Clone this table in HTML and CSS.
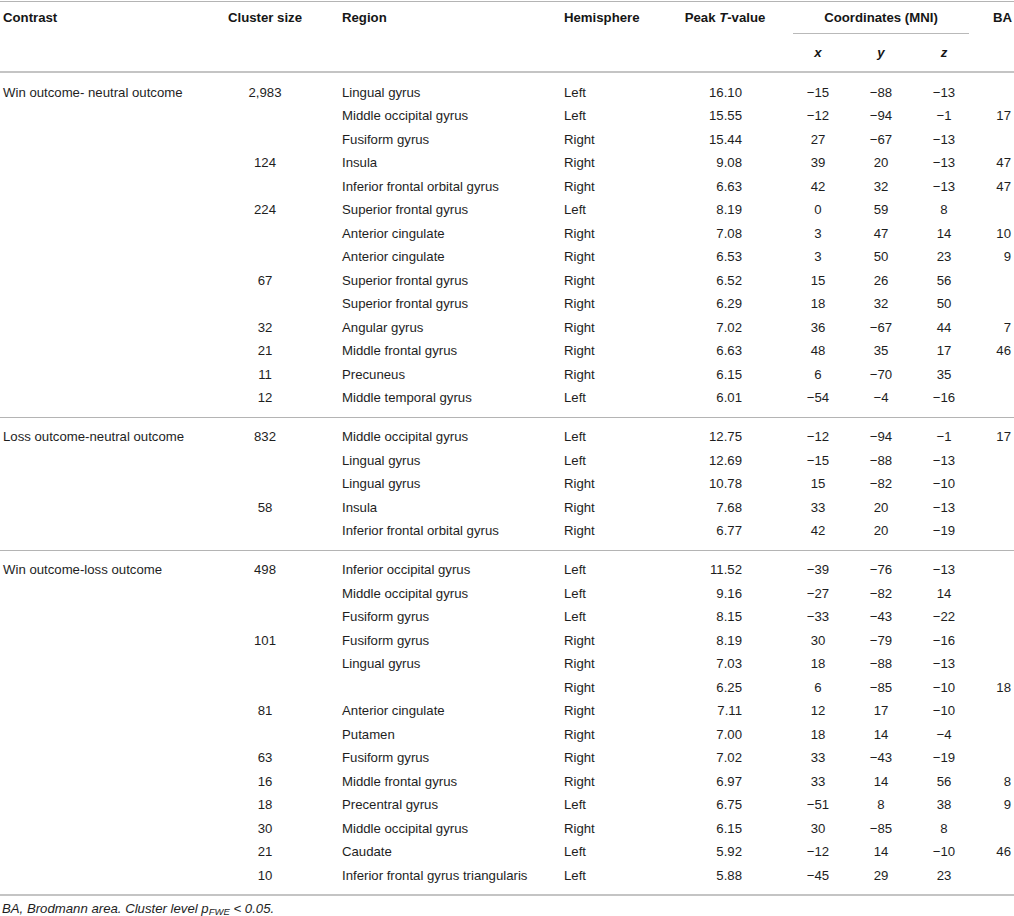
FILE: index.html
```html
<!DOCTYPE html>
<html lang="en">
<head>
<meta charset="utf-8">
<title>Table</title>
<link rel="stylesheet" href="styles.css">
</head>
<body>
<div class="wrap">
<table class="results">
  <colgroup>
    <col class="c-contrast"><col class="c-size"><col class="c-region"><col class="c-hemi"><col class="c-peak"><col class="c-x"><col class="c-y"><col class="c-z"><col class="c-ba">
  </colgroup>
  <thead>
    <tr class="h1">
      <th rowspan="2" class="l">Contrast</th>
      <th rowspan="2" class="c">Cluster size</th>
      <th rowspan="2" class="l">Region</th>
      <th rowspan="2" class="l">Hemisphere</th>
      <th rowspan="2" class="peak-h">Peak <i>T</i>-value</th>
      <th colspan="3" class="coord-h"><div class="coord-title">Coordinates (MNI)</div></th>
      <th rowspan="2" class="ba-h">BA</th>
    </tr>
    <tr class="h2">
      <th class="c"><i>x</i></th>
      <th class="c"><i>y</i></th>
      <th class="c"><i>z</i></th>
    </tr>
  </thead>
  <tbody>
    <tr><td class="l">Win outcome- neutral outcome</td><td class="c">2,983</td><td class="l">Lingual gyrus</td><td class="l">Left</td><td class="peak">16.10</td><td class="c">−15</td><td class="c">−88</td><td class="c">−13</td><td class="ba"></td></tr>
    <tr><td></td><td class="c"></td><td class="l">Middle occipital gyrus</td><td class="l">Left</td><td class="peak">15.55</td><td class="c">−12</td><td class="c">−94</td><td class="c">−1</td><td class="ba">17</td></tr>
    <tr><td></td><td class="c"></td><td class="l">Fusiform gyrus</td><td class="l">Right</td><td class="peak">15.44</td><td class="c">27</td><td class="c">−67</td><td class="c">−13</td><td class="ba"></td></tr>
    <tr><td></td><td class="c">124</td><td class="l">Insula</td><td class="l">Right</td><td class="peak">9.08</td><td class="c">39</td><td class="c">20</td><td class="c">−13</td><td class="ba">47</td></tr>
    <tr><td></td><td class="c"></td><td class="l">Inferior frontal orbital gyrus</td><td class="l">Right</td><td class="peak">6.63</td><td class="c">42</td><td class="c">32</td><td class="c">−13</td><td class="ba">47</td></tr>
    <tr><td></td><td class="c">224</td><td class="l">Superior frontal gyrus</td><td class="l">Left</td><td class="peak">8.19</td><td class="c">0</td><td class="c">59</td><td class="c">8</td><td class="ba"></td></tr>
    <tr><td></td><td class="c"></td><td class="l">Anterior cingulate</td><td class="l">Right</td><td class="peak">7.08</td><td class="c">3</td><td class="c">47</td><td class="c">14</td><td class="ba">10</td></tr>
    <tr><td></td><td class="c"></td><td class="l">Anterior cingulate</td><td class="l">Right</td><td class="peak">6.53</td><td class="c">3</td><td class="c">50</td><td class="c">23</td><td class="ba">9</td></tr>
    <tr><td></td><td class="c">67</td><td class="l">Superior frontal gyrus</td><td class="l">Right</td><td class="peak">6.52</td><td class="c">15</td><td class="c">26</td><td class="c">56</td><td class="ba"></td></tr>
    <tr><td></td><td class="c"></td><td class="l">Superior frontal gyrus</td><td class="l">Right</td><td class="peak">6.29</td><td class="c">18</td><td class="c">32</td><td class="c">50</td><td class="ba"></td></tr>
    <tr><td></td><td class="c">32</td><td class="l">Angular gyrus</td><td class="l">Right</td><td class="peak">7.02</td><td class="c">36</td><td class="c">−67</td><td class="c">44</td><td class="ba">7</td></tr>
    <tr><td></td><td class="c">21</td><td class="l">Middle frontal gyrus</td><td class="l">Right</td><td class="peak">6.63</td><td class="c">48</td><td class="c">35</td><td class="c">17</td><td class="ba">46</td></tr>
    <tr><td></td><td class="c">11</td><td class="l">Precuneus</td><td class="l">Right</td><td class="peak">6.15</td><td class="c">6</td><td class="c">−70</td><td class="c">35</td><td class="ba"></td></tr>
    <tr><td></td><td class="c">12</td><td class="l">Middle temporal gyrus</td><td class="l">Left</td><td class="peak">6.01</td><td class="c">−54</td><td class="c">−4</td><td class="c">−16</td><td class="ba"></td></tr>
  </tbody>
  <tbody>
    <tr><td class="l">Loss outcome-neutral outcome</td><td class="c">832</td><td class="l">Middle occipital gyrus</td><td class="l">Left</td><td class="peak">12.75</td><td class="c">−12</td><td class="c">−94</td><td class="c">−1</td><td class="ba">17</td></tr>
    <tr><td></td><td class="c"></td><td class="l">Lingual gyrus</td><td class="l">Left</td><td class="peak">12.69</td><td class="c">−15</td><td class="c">−88</td><td class="c">−13</td><td class="ba"></td></tr>
    <tr><td></td><td class="c"></td><td class="l">Lingual gyrus</td><td class="l">Right</td><td class="peak">10.78</td><td class="c">15</td><td class="c">−82</td><td class="c">−10</td><td class="ba"></td></tr>
    <tr><td></td><td class="c">58</td><td class="l">Insula</td><td class="l">Right</td><td class="peak">7.68</td><td class="c">33</td><td class="c">20</td><td class="c">−13</td><td class="ba"></td></tr>
    <tr><td></td><td class="c"></td><td class="l">Inferior frontal orbital gyrus</td><td class="l">Right</td><td class="peak">6.77</td><td class="c">42</td><td class="c">20</td><td class="c">−19</td><td class="ba"></td></tr>
  </tbody>
  <tbody class="last">
    <tr><td class="l">Win outcome-loss outcome</td><td class="c">498</td><td class="l">Inferior occipital gyrus</td><td class="l">Left</td><td class="peak">11.52</td><td class="c">−39</td><td class="c">−76</td><td class="c">−13</td><td class="ba"></td></tr>
    <tr><td></td><td class="c"></td><td class="l">Middle occipital gyrus</td><td class="l">Left</td><td class="peak">9.16</td><td class="c">−27</td><td class="c">−82</td><td class="c">14</td><td class="ba"></td></tr>
    <tr><td></td><td class="c"></td><td class="l">Fusiform gyrus</td><td class="l">Left</td><td class="peak">8.15</td><td class="c">−33</td><td class="c">−43</td><td class="c">−22</td><td class="ba"></td></tr>
    <tr><td></td><td class="c">101</td><td class="l">Fusiform gyrus</td><td class="l">Right</td><td class="peak">8.19</td><td class="c">30</td><td class="c">−79</td><td class="c">−16</td><td class="ba"></td></tr>
    <tr><td></td><td class="c"></td><td class="l">Lingual gyrus</td><td class="l">Right</td><td class="peak">7.03</td><td class="c">18</td><td class="c">−88</td><td class="c">−13</td><td class="ba"></td></tr>
    <tr><td></td><td class="c"></td><td class="l"></td><td class="l">Right</td><td class="peak">6.25</td><td class="c">6</td><td class="c">−85</td><td class="c">−10</td><td class="ba">18</td></tr>
    <tr><td></td><td class="c">81</td><td class="l">Anterior cingulate</td><td class="l">Right</td><td class="peak">7.11</td><td class="c">12</td><td class="c">17</td><td class="c">−10</td><td class="ba"></td></tr>
    <tr><td></td><td class="c"></td><td class="l">Putamen</td><td class="l">Right</td><td class="peak">7.00</td><td class="c">18</td><td class="c">14</td><td class="c">−4</td><td class="ba"></td></tr>
    <tr><td></td><td class="c">63</td><td class="l">Fusiform gyrus</td><td class="l">Right</td><td class="peak">7.02</td><td class="c">33</td><td class="c">−43</td><td class="c">−19</td><td class="ba"></td></tr>
    <tr><td></td><td class="c">16</td><td class="l">Middle frontal gyrus</td><td class="l">Right</td><td class="peak">6.97</td><td class="c">33</td><td class="c">14</td><td class="c">56</td><td class="ba">8</td></tr>
    <tr><td></td><td class="c">18</td><td class="l">Precentral gyrus</td><td class="l">Left</td><td class="peak">6.75</td><td class="c">−51</td><td class="c">8</td><td class="c">38</td><td class="ba">9</td></tr>
    <tr><td></td><td class="c">30</td><td class="l">Middle occipital gyrus</td><td class="l">Right</td><td class="peak">6.15</td><td class="c">30</td><td class="c">−85</td><td class="c">8</td><td class="ba"></td></tr>
    <tr><td></td><td class="c">21</td><td class="l">Caudate</td><td class="l">Left</td><td class="peak">5.92</td><td class="c">−12</td><td class="c">14</td><td class="c">−10</td><td class="ba">46</td></tr>
    <tr><td></td><td class="c">10</td><td class="l">Inferior frontal gyrus triangularis</td><td class="l">Left</td><td class="peak">5.88</td><td class="c">−45</td><td class="c">29</td><td class="c">23</td><td class="ba"></td></tr>
  </tbody>
</table>
<p class="note"><i>BA, Brodmann area. Cluster level p<sub>FWE</sub> &lt; 0.05.</i></p>
</div>
</body>
</html>
```

FILE: styles.css
```css
html, body {
  margin: 0;
  padding: 0;
  background: #ffffff;
}

body {
  font-family: "Liberation Sans", Arial, Helvetica, sans-serif;
  font-size: 13.2px;
  color: #1e1e1e;
}

.wrap {
  width: 1014px;
  padding-top: 1px;
}

.results {
  width: 1014px;
  table-layout: fixed;
  border-collapse: separate;
  border-spacing: 0;
  border-top: 1px solid #b4b4b4;
}

.c-contrast { width: 191px; }
.c-size { width: 148px; }
.c-region { width: 222px; }
.c-hemi { width: 119px; }
.c-peak { width: 113px; }
.c-x { width: 50px; }
.c-y { width: 76px; }
.c-z { width: 50px; }
.c-ba { width: 45px; }

th, td {
  padding: 0;
  white-space: nowrap;
}

th {
  font-weight: bold;
  color: #161616;
  line-height: 15px;
}

.h1 th {
  vertical-align: top;
  padding-top: 8px;
  border-bottom: 2px solid #c4c4c4;
}

.h1 th.coord-h {
  height: 23px;
  padding-bottom: 0;
  border-bottom: none;
}

.coord-title {
  text-align: center;
  padding-bottom: 8px;
  border-bottom: 1px solid #b9b9b9;
}

.h2 th {
  height: 37px;
  vertical-align: middle;
  border-bottom: 2px solid #c4c4c4;
}

td {
  height: 23.5px;
  line-height: 15px;
  vertical-align: middle;
}

.l { text-align: left; padding-left: 3px; }
.c { text-align: center; }

.peak-h { text-align: center; padding-right: 23px; }
.peak { text-align: right; padding-right: 51px; }

.ba-h { text-align: right; padding-right: 2px; }
.ba { text-align: right; padding-right: 3px; }

tbody tr:first-child td { padding-top: 7.5px; }
tbody tr:last-child td { padding-bottom: 7px; }

tbody + tbody tr:first-child td {
  border-top: 1px solid #b4b4b4;
}

tbody.last tr:last-child td {
  border-bottom: 2px solid #c4c4c4;
}

.note {
  margin: 5px 0 0 0;
  padding-left: 2px;
  line-height: 16px;
}

.note sub {
  font-size: 0.72em;
  vertical-align: -0.25em;
  line-height: 0;
}
```
